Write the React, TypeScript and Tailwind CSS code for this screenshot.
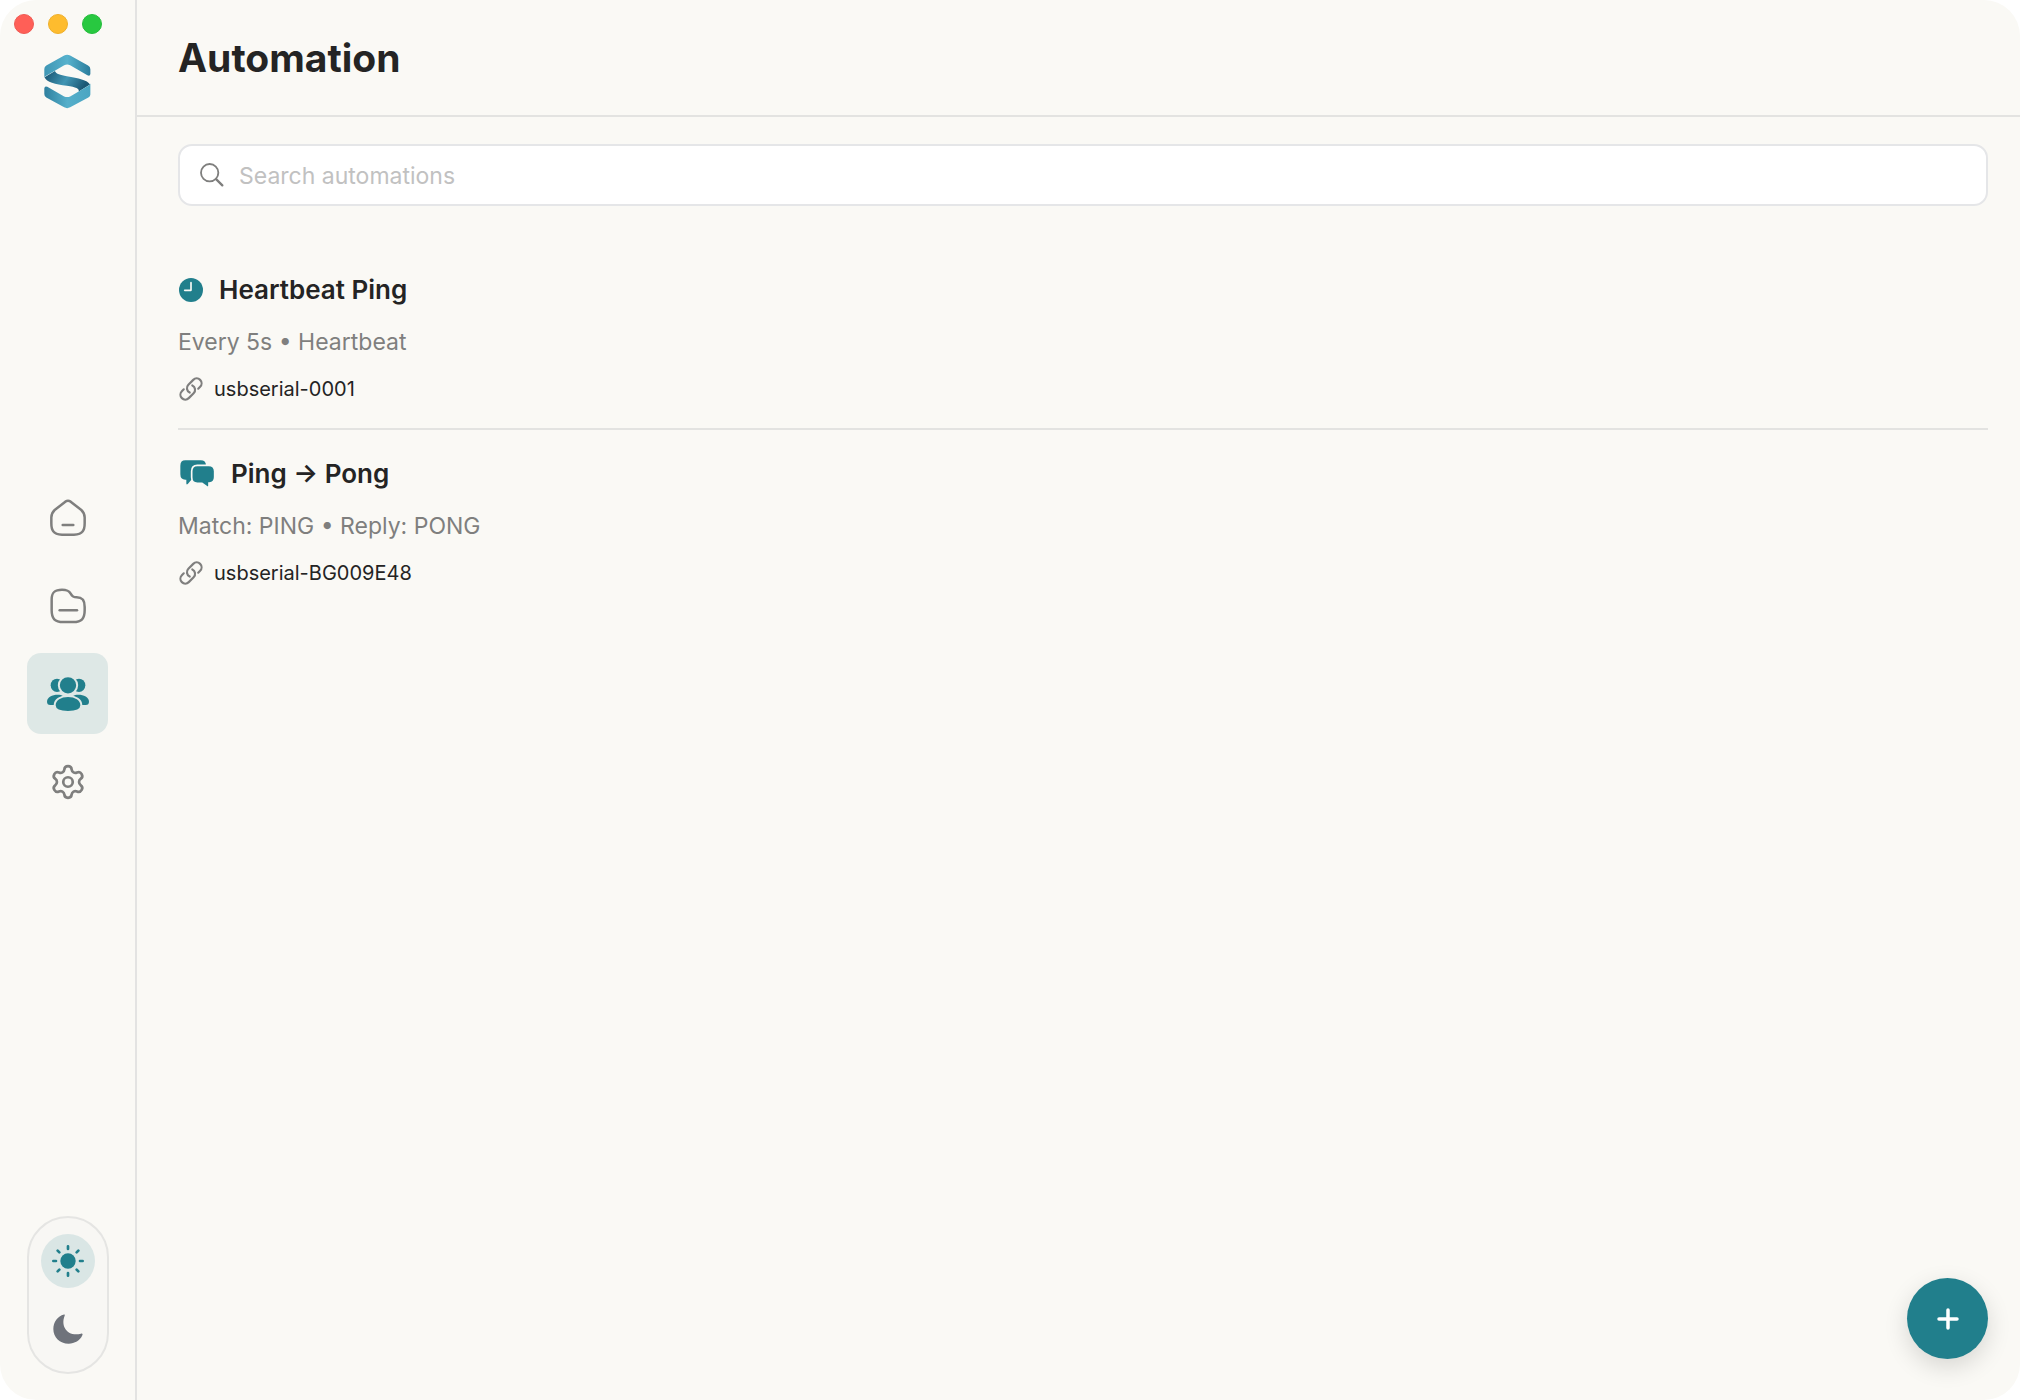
import { useState } from 'react';
import type { ReactNode } from 'react';
import { Settings } from 'lucide-react';
import { HiOutlineLink } from 'react-icons/hi2';

type Automation = {
  id: string;
  kind: 'timer' | 'reply';
  name: string;
  detail: string;
  port: string;
};

const automations: Automation[] = [
  {
    id: '1',
    kind: 'timer',
    name: 'Heartbeat Ping',
    detail: 'Every 5s • Heartbeat',
    port: 'usbserial-0001'
  },
  {
    id: '2',
    kind: 'reply',
    name: 'Ping → Pong',
    detail: 'Match: PING • Reply: PONG',
    port: 'usbserial-BG009E48'
  }
];

function Logo() {
  return (
    <svg width="48" height="55" viewBox="132 160 143 166" role="img" aria-label="Logo" className="overflow-visible">
      <defs>
        <linearGradient id="band-top" x1="0" y1="0.5" x2="1" y2="0.5">
          <stop offset="0" stopColor="#3f96b4" />
          <stop offset="0.5" stopColor="#57b2cd" />
          <stop offset="1" stopColor="#2b7d9c" />
        </linearGradient>
        <linearGradient id="band-mid" x1="0" y1="0" x2="1" y2="0.3">
          <stop offset="0" stopColor="#174f6c" />
          <stop offset="0.55" stopColor="#4196b4" />
          <stop offset="1" stopColor="#1b5875" />
        </linearGradient>
        <linearGradient id="band-bottom" x1="0" y1="0.5" x2="1" y2="0.5">
          <stop offset="0" stopColor="#2f809f" />
          <stop offset="0.5" stopColor="#55afca" />
          <stop offset="1" stopColor="#4aa5c2" />
        </linearGradient>
      </defs>
      <path
        d="M133 230L164 211C168 220 180 223 200 227C235 233 262 238 270 252L236 273C238 265 228 260 200 256C165 250 138 246 133 230Z"
        fill="url(#band-mid)"
      />
      <path
        d="M132 205Q132 199 138 195L192 164.500Q201 160 210 164.500L264 195Q271 199 271 206V220Q270 228 262 224L210 194Q201 190 192 194L138 226Q132 229 132 233Z"
        fill="url(#band-top)"
      />
      <path
        d="M132 264Q133 255 141 259L192 288Q201 292 210 288L265 256Q270 253 271 249V282Q271 288 265 291L210 321Q201 326 192 321L138 291Q132 288 132 281Z"
        fill="url(#band-bottom)"
      />
    </svg>
  );
}

function HomeIcon() {
  return (
    <svg width="36" height="38" viewBox="0 0 108 114" fill="none" stroke="currentColor" strokeWidth="7.500" strokeLinecap="round" strokeLinejoin="round">
      <path d="M46 8Q54 3 62 8L94 33Q103 41 104 55V73Q104 90 98 97Q92 106 72 107H36Q16 106 10 97Q4 90 4 73V55Q5 41 14 33Z" />
      <path d="M38 78H70" />
    </svg>
  );
}

function FolderIcon() {
  return (
    <svg width="36" height="36" viewBox="0 0 108 108" fill="none" stroke="currentColor" strokeWidth="7.500" strokeLinecap="round" strokeLinejoin="round">
      <path d="M5 34C5 13 14 5 36 5C52 5 57 8 62 17C67 26 70 28 80 28C97 28 104 36 104 57V67C104 92 95 102 70 102H40C14 102 5 92 5 67Z" />
      <path d="M29 67H81" />
    </svg>
  );
}

function PeopleIcon() {
  return (
    <svg width="42" height="34" viewBox="81 108 126 102" fill="currentColor">
      <ellipse cx="111" cy="133" rx="19" ry="20" />
      <ellipse cx="177" cy="133" rx="19" ry="20" />
      <path d="M81 182C81 168 97 161 113 161C120 161 125 162 129 165L108 192H91C84 192 81 188 81 182Z" />
      <path d="M207 182C207 168 191 161 175 161C168 161 163 162 159 165L180 192H197C204 192 207 188 207 182Z" />
      <circle cx="144" cy="133" r="27.500" stroke="#dee8e6" strokeWidth="6" />
      <path d="M104 193C104 176 122 165 144 165C166 165 184 176 184 193C184 206 173 213 144 213C115 213 104 206 104 193Z" stroke="#dee8e6" strokeWidth="6" />
    </svg>
  );
}

function SunIcon() {
  return (
    <svg width="32" height="32" viewBox="0 0 96 96" fill="none" stroke="currentColor" strokeWidth="8" strokeLinecap="round">
      <circle cx="48" cy="48" r="23" fill="currentColor" stroke="none" />
      <path d="M48 4V12M48 84V92M4 48H12M84 48H92M17 17L22 22M74 74L79 79M17 79L22 74M74 22L79 17" />
    </svg>
  );
}

function MoonIcon() {
  return (
    <svg width="30" height="30" viewBox="0 0 90 90" fill="currentColor">
      <path d="M33 1.500C35 1 36 2.500 35 5C31 15 29 28 35 41C43 58 63 65 84 59C88 57.500 90 60 88 64C81 80 65 89 47 89C20 89 1 70 1 45C1 24 14 7 33 1.500Z" />
    </svg>
  );
}

function ClockIcon() {
  return (
    <svg width="24" height="24" viewBox="0 0 72 72" fill="none" className="mx-px shrink-0">
      <circle cx="36" cy="36" r="36" fill="currentColor" />
      <path d="M36 14V37H17" stroke="#faf9f5" strokeWidth="5" strokeLinecap="round" strokeLinejoin="round" />
    </svg>
  );
}

function ChatIcon() {
  return (
    <svg width="38" height="28" viewBox="-6 -1 114 84" fill="currentColor" className="shrink-0">
      <path d="M16 0H62Q78 0 78 16V42Q78 58 62 58H34L24 70Q19 75 19 69V58H16Q1 58 1 42V16Q1 0 16 0Z" />
      <path
        d="M52 15H86Q104 15 104 33V50Q104 68 88 68H87V76Q86 84 80 79L66 69H52Q35 69 35 51V33Q35 15 52 15Z"
        stroke="#faf9f5"
        strokeWidth="5"
      />
    </svg>
  );
}

function SearchIcon() {
  return (
    <svg width="24" height="24" viewBox="0 0 72 72" fill="none" stroke="currentColor" strokeLinecap="round">
      <circle cx="29" cy="29" r="26" strokeWidth="5.500" />
      <path d="M49 49L67 67" strokeWidth="7" />
    </svg>
  );
}

const navItems: { id: string; label: string; icon: ReactNode }[] = [
  { id: 'home', label: 'Home', icon: <HomeIcon /> },
  { id: 'files', label: 'Files', icon: <FolderIcon /> },
  { id: 'automation', label: 'Automation', icon: <PeopleIcon /> },
  { id: 'settings', label: 'Settings', icon: <Settings size={38} strokeWidth={1.7} /> }
];

export default function App() {
  const [active, setActive] = useState('automation');
  const [theme, setTheme] = useState('light');
  const [query, setQuery] = useState('');

  const visible = automations.filter(item =>
    item.name.toLowerCase().includes(query.toLowerCase())
  );

  return (
    <div className="min-h-screen bg-white font-['Inter',sans-serif] text-[#242424]">
      <div className="relative flex min-h-screen overflow-hidden rounded-[36px] bg-[#faf9f5]">
        <aside className="flex w-[137px] shrink-0 flex-col items-center border-r-2 border-[#e3e3e2] pb-[26px]">
          <div className="flex gap-[14px] self-start pt-[14px] pl-[14px]">
            <button type="button" aria-label="Close" className="size-5 rounded-full border border-[#ee5a53] bg-[#ff5f57]" />
            <button type="button" aria-label="Minimize" className="size-5 rounded-full border border-[#eeb02c] bg-[#febc2e]" />
            <button type="button" aria-label="Zoom" className="size-5 rounded-full border border-[#25bc3c] bg-[#28c840]" />
          </div>
          <div className="mt-5">
            <Logo />
          </div>

          <nav className="flex flex-1 flex-col items-center justify-center gap-[7px]">
            {navItems.map(item => (
              <button
                key={item.id}
                type="button"
                aria-label={item.label}
                onClick={() => setActive(item.id)}
                className={`flex size-[81px] items-center justify-center rounded-[14px] ${
                  active === item.id ? 'bg-[#dee8e6] text-[#217f8c]' : 'text-[#7f7f7e]'
                }`}
              >
                {item.icon}
              </button>
            ))}
          </nav>

          <div className="mt-[26px] flex flex-col gap-[14px] rounded-full border-2 border-[#e5e5e3] bg-[#f8f7f4] px-3 py-4">
            <button
              type="button"
              aria-label="Light theme"
              onClick={() => setTheme('light')}
              className={`flex size-[54px] items-center justify-center rounded-full ${
                theme === 'light' ? 'bg-[#dae6e5] text-[#217f8c]' : 'text-[#6f737b]'
              }`}
            >
              <SunIcon />
            </button>
            <button
              type="button"
              aria-label="Dark theme"
              onClick={() => setTheme('dark')}
              className={`flex size-[54px] items-center justify-center rounded-full ${
                theme === 'dark' ? 'bg-[#dae6e5] text-[#217f8c]' : 'text-[#6f737b]'
              }`}
            >
              <MoonIcon />
            </button>
          </div>
        </aside>

        <div className="flex min-w-0 flex-1 flex-col">
          <header className="border-b-2 border-[#e3e3e1] pt-[34px] pr-8 pb-[33px] pl-[41px]">
            <h1 className="text-[39px] leading-12 font-bold">Automation</h1>
          </header>

          <main className="pt-[27px] pr-8 pl-[41px]">
            <label className="flex h-[62px] items-center gap-[15px] rounded-[14px] border-2 border-[#e5e6e8] bg-white px-5 text-[#7f7f7e]">
              <SearchIcon />
              <input
                type="text"
                value={query}
                onChange={e => setQuery(e.target.value)}
                placeholder="Search automations"
                aria-label="Search automations"
                className="min-w-0 flex-1 bg-transparent pt-0.5 text-[23px] leading-8 text-[#242424] outline-none placeholder:text-[#c1c1c1]"
              />
            </label>

            <ul className="mt-10 divide-y-2 divide-[#e3e3e1]">
              {visible.map(item => (
                <li key={item.id} className="py-[26px]">
                  <div className="flex items-center gap-[15px]">
                    <span className="flex text-[#217f8c]">
                      {item.kind === 'timer' ? <ClockIcon /> : <ChatIcon />}
                    </span>
                    <h2 className="text-[26px] leading-9 font-semibold">{item.name}</h2>
                  </div>
                  <p className="mt-4 text-[23px] leading-9 text-[#7f7f7e]">{item.detail}</p>
                  <div className="mt-4 flex items-center gap-[10px]">
                    <HiOutlineLink strokeWidth={2} className="size-[26px] text-[#7f7f7e]" />
                    <span className="text-xl leading-[26px]">{item.port}</span>
                  </div>
                </li>
              ))}
            </ul>
          </main>
        </div>

        <button
          type="button"
          aria-label="Add automation"
          className="absolute right-8 bottom-[41px] flex size-[81px] items-center justify-center rounded-full bg-[#217f8c] text-white shadow-[0_8px_24px_rgba(0,0,0,0.14)]"
        >
          <svg width="24" height="24" viewBox="0 0 24 24" fill="none" stroke="currentColor" strokeWidth="3.500" strokeLinecap="round">
            <path d="M12 3V21M3 12H21" />
          </svg>
        </button>
      </div>
    </div>
  );
}
